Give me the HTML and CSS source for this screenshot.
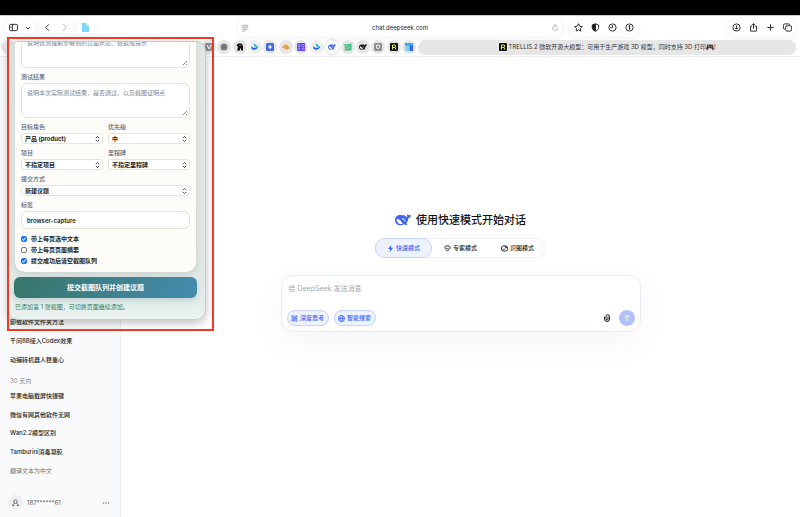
FILE: index.html
```
<!DOCTYPE html>
<html lang="zh-CN">

<head>
    <meta charset="UTF-8">
    <meta name="viewport" content="width=device-width, initial-scale=1.0">
    <title>DeepSeek</title>
    <link rel="stylesheet" href="styles.css">
</head>

<body>
    <div class="screen-edge"></div>

    <header class="browser">
        <div class="toolbar">
            <div class="toolbar-side">
                <div class="pill pill-sidebar">
                    <button aria-label="边栏"><svg viewBox="0 0 20 20"><rect x="1" y="3" width="18" height="14" rx="3"/><path d="M8 3v14M3.500 7h2M3.500 10h2"/></svg></button>
                    <button aria-label="标签页组" class="small"><svg viewBox="0 0 20 20"><path d="M3 7l7 6 7-6" stroke-width="3"/></svg></button>
                </div>
                <div class="pill">
                    <button aria-label="后退"><svg viewBox="0 0 20 20"><path d="M13 3l-7 7 7 7" stroke-width="2"/></svg></button>
                    <button aria-label="前进" class="muted"><svg viewBox="0 0 20 20"><path d="M7 3l7 7-7 7" stroke-width="2"/></svg></button>
                </div>
                <div class="pill">
                    <button aria-label="扩展"><svg viewBox="0 0 20 20"><path d="M2 0h10l6 6v14H2z" fill="#7fd6fb" stroke="none"/><path d="M12 0l6 6h-6z" fill="#c9f0ff" stroke="none"/></svg></button>
                </div>
            </div>

            <div class="address">
                <button aria-label="阅读器" class="muted"><svg viewBox="0 0 20 20"><path d="M3 3h14v7H3zM3 14h12M3 18h8M6 6.500h8"/></svg></button>
                <span>chat.deepseek.com</span>
                <button aria-label="重新载入" class="muted"><svg viewBox="0 0 20 20"><path d="M16 10a6 6 0 1 1-3-5M10 1l4 4-4 4"/></svg></button>
            </div>

            <div class="toolbar-side">
                <div class="pill">
                    <button aria-label="收藏"><svg viewBox="0 0 20 20"><path d="M10 1.500l2.600 5.500 6 .8-4.400 4.200 1.100 6L10 15.100 4.700 18l1.100-6L1.400 7.800l6-.8z"/></svg></button>
                    <button aria-label="隐私报告"><svg viewBox="0 0 20 20"><path d="M10 2l7 2.500V10c0 4-3 6.500-7 8-4-1.500-7-4-7-8V4.500z"/><path d="M10 2v16c-4-1.500-7-4-7-8V4.500z" fill="#222"/></svg></button>
                    <button aria-label="历史记录"><svg viewBox="0 0 20 20"><circle cx="10" cy="10" r="8"/><path d="M10 5v5.500H5"/></svg></button>
                    <button aria-label="密码"><svg viewBox="0 0 20 20"><circle cx="10" cy="10" r="8"/><circle cx="10" cy="7" r="1.500"/><path d="M10 8.500V15M10 12h2"/></svg></button>
                </div>
                <div class="pill pill-right">
                    <button aria-label="下载"><svg viewBox="0 0 20 20"><circle cx="10" cy="10" r="8"/><path d="M10 5.500v8M6.500 10.500l3.500 3.500 3.500-3.500"/></svg></button>
                    <button aria-label="共享"><svg viewBox="0 0 20 20"><path d="M7 7H3.500v11h13V7H13M10 13V1.500M6.500 5L10 1.500 13.500 5"/></svg></button>
                    <button aria-label="新标签页"><svg viewBox="0 0 20 20"><path d="M10 3v14M3 10h14"/></svg></button>
                    <button aria-label="标签页概览"><svg viewBox="0 0 20 20"><rect x="6" y="6" width="13" height="12" rx="3"/><path d="M4 14c-2 0-3-1-3-3V5c0-2 1-3 3-3h8c2 0 3 1 3 3"/></svg></button>
                </div>
            </div>
        </div>

        <nav class="tabbar" aria-label="标签页">
            <span class="tab"></span>
            <div class="tab-strip">
                <span class="tab"><svg viewBox="0 0 16 16"><rect width="16" height="16" rx="3" fill="#8b8d96"/><path d="M4 4l4 8 4-8" fill="none" stroke="#fff" stroke-width="2"/></svg></span>
                <span class="tab"><svg viewBox="0 0 16 16"><circle cx="8" cy="8" r="7" fill="#808080"/><circle cx="8" cy="8" r="3" fill="#6a6a6a"/></svg></span>
                <span class="tab"><svg viewBox="0 0 16 16"><path d="M1 4l4-3h6l3 5v9h-4v-4H8v4H2l2-7z" fill="#111"/><circle cx="8" cy="5" r="1" fill="#fff"/></svg></span>
                <span class="tab tab-light"><svg viewBox="0 0 16 16"><use href="#swoosh"/></svg></span>
                <span class="tab"><svg viewBox="0 0 16 16"><rect width="16" height="16" rx="3" fill="#4069e8"/><path d="M8 3l4 5-4 5-4-5z" fill="#dfe9ff"/></svg></span>
                <span class="tab"><svg viewBox="0 0 16 16"><path d="M2 6l6-4 6 4-3 2 4 2-6 4-6-4 3-2z" fill="#f0a23c"/><path d="M0 8h7M9 10h7" stroke="#c98b54" stroke-width="2"/></svg></span>
                <span class="tab"><svg viewBox="0 0 16 16"><rect width="16" height="16" rx="2" fill="#5b3df0"/><path d="M2 3h4v4H2zM10 3h4v4h-4zM2 10h4v3H2zM10 10h4v3h-4z" fill="none" stroke="#cfc4ff" stroke-width="1"/></svg></span>
                <span class="tab tab-light"><svg viewBox="0 0 16 16"><use href="#swoosh"/></svg></span>
                <span class="tab tab-open"><svg viewBox="0 0 24 18" class="whale"><use href="#whale"/></svg></span>
                <span class="tab"><svg viewBox="0 0 16 16"><path d="M0 3l15-2v14H1l1-5z" fill="#45bd87"/><path d="M2 7l7-2M4 12l8-4" stroke="#e8fff4" stroke-width="1"/></svg></span>
                <span class="tab"><svg viewBox="0 0 24 18" class="whale whale-dark"><use href="#whale"/></svg></span>
                <span class="tab"><svg viewBox="0 0 16 16"><rect width="16" height="16" rx="3" fill="#8b8d96"/><rect x="5" y="4" width="6" height="7" rx="2" fill="none" stroke="#fff" stroke-width="2"/></svg></span>
                <span class="tab"><svg viewBox="0 0 16 16"><use href="#runner"/></svg></span>
                <span class="tab"><svg viewBox="0 0 16 16"><rect width="16" height="16" rx="1" fill="#3b64f2"/><path d="M0 0h16v5H0z" fill="#35a5f5"/><path d="M0 5h9v11H0z" fill="#7cdcf3"/></svg></span>
            </div>
            <a class="tab-current" href="#"><svg viewBox="0 0 16 16"><use href="#runner"/></svg><span class="tab-title">TRELLIS.2 微软开源大模型：可用于生产游戏 3D 模型，同时支持 3D 打印</span><svg viewBox="0 0 20 16"><path d="M3 2h14l3 12-3 2-4-5H7l-4 5-3-2z" fill="#444"/><path d="M5 6h4M7 4v4" stroke="#ddd"/><circle cx="14" cy="6" r="1.500" fill="#c66"/></svg><span>!</span></a>
        </nav>
    </header>

    <div class="app">
        <aside class="sidebar">
            <nav class="history">
                <a href="#">卸载软件文件夹方法</a>
                <a href="#">千问8B接入Codex效果</a>
                <a href="#">动捕转机器人稳重心</a>
            </nav>
            <h2>30 天内</h2>
            <nav class="history history-month">
                <a href="#">苹果电脑截屏快捷键</a>
                <a href="#">微信有网其他软件无网</a>
                <a href="#">Wan2.2模型区别</a>
                <a href="#">Tamburini消毒凝胶</a>
                <a href="#" class="faded">翻译文本为中文</a>
            </nav>
            <div class="account">
                <span class="avatar"><svg viewBox="0 0 16 16"><circle cx="8" cy="6" r="4"/><path d="M1 15c1-3 3-4 5-5M15 15c-1-3-3-4-5-5M1 15h4M11 15h4"/></svg></span>
                <span>187******61</span>
                <button aria-label="更多"><svg viewBox="0 0 16 16"><circle cx="3" cy="8" r="1"/><circle cx="8" cy="8" r="1"/><circle cx="13" cy="8" r="1"/></svg></button>
            </div>
        </aside>

        <main class="chat">
            <h1><svg viewBox="0 0 24 18" class="whale"><use href="#whale"/></svg>使用快速模式开始对话</h1>

            <div class="modes">
                <button class="active"><svg viewBox="0 0 16 16"><path d="M10 0L2 9h5l-1 7 8-10H9z" fill="#4166f5" stroke="none"/></svg>快速模式</button>
                <button><svg viewBox="0 0 16 16"><path d="M4 2h8l3 4-7 8-7-8zM5 6l3 3 3-3"/></svg>专家模式</button>
                <button><svg viewBox="0 0 16 16"><rect x="1" y="2" width="14" height="12" rx="5"/><path d="M3 12c3-5 5-1 7-3M10 2v4h4"/></svg>识图模式</button>
            </div>

            <form class="composer">
                <textarea aria-label="消息" rows="1" placeholder="给 DeepSeek 发送消息"></textarea>
                <div class="composer-actions">
                    <button type="button" class="chip"><svg viewBox="0 0 16 16"><path d="M2 2c4-2 12 6 12 12-4 2-12-6-12-12zM14 2c2 4-6 12-12 12C0 10 8 2 14 2z"/><circle cx="8" cy="8" r="1"/></svg>深度思考</button>
                    <button type="button" class="chip"><svg viewBox="0 0 16 16"><circle cx="8" cy="8" r="7"/><ellipse cx="8" cy="8" rx="3" ry="7"/><path d="M1 8h14"/></svg>智能搜索</button>
                    <button type="button" class="attach" aria-label="附件"><svg viewBox="0 0 16 16"><path d="M3 5v5a5 5 0 0 0 10 0V5a3.500 3.500 0 0 0-7 0v5a2 2 0 0 0 4 0V5"/></svg></button>
                    <button type="submit" class="send" aria-label="发送"><svg viewBox="0 0 16 16"><path d="M8 14V2M3 7l5-5 5 5"/></svg></button>
                </div>
            </form>
        </main>
    </div>

    <section class="popup">
        <form class="capture">
            <div class="card">
                <div class="field">
                    <textarea aria-label="期望结果" placeholder="说明该流程期望看到的页面状态、数据或提示"></textarea>
                </div>
                <div class="field">
                    <label for="result">测试结果</label>
                    <textarea id="result" placeholder="说明本次实际测试结果，是否通过，以及截图证明点"></textarea>
                </div>
                <div class="field-row">
                    <div class="field">
                        <label for="role">目标角色</label>
                        <select id="role"><option>产品 (product)</option></select>
                    </div>
                    <div class="field">
                        <label for="priority">优先级</label>
                        <select id="priority"><option>中</option></select>
                    </div>
                </div>
                <div class="field-row">
                    <div class="field">
                        <label for="project">项目</label>
                        <select id="project"><option>不指定项目</option></select>
                    </div>
                    <div class="field">
                        <label for="milestone">里程碑</label>
                        <select id="milestone"><option>不指定里程碑</option></select>
                    </div>
                </div>
                <div class="field">
                    <label for="method">提交方式</label>
                    <select id="method"><option>新建议题</option></select>
                </div>
                <div class="field">
                    <label for="tags">标签</label>
                    <input type="text" id="tags" value="browser-capture">
                </div>
                <div class="checks">
                    <label><input type="checkbox" checked>带上每页选中文本</label>
                    <label><input type="checkbox">带上每页页面摘要</label>
                    <label><input type="checkbox" checked>提交成功后清空截图队列</label>
                </div>
            </div>
            <button type="submit" class="submit">提交截图队列并创建议题</button>
            <p class="status">已添加第 1 张截图，可切换页面继续添加。</p>
        </form>
    </section>
    <div class="highlight"></div>

    <!-- shared symbols -->
    <svg class="symbols" aria-hidden="true">
        <symbol id="whale" viewBox="0 0 24 18">
            <path d="M0 9C0 4 4 1 9 1.500c1.500.1 2.500.5 3.500 1.200L12 1c2 .2 3.500 1.500 4.500 3 .8.600 1.500.400 2 0-.6-1-.8-2.300-.3-3.500 1 1.500 3.300 1.800 5.800 1-.2 2.500-1.500 4.500-4 5 0 3-1.200 5.300-3 7.200l2 2c-1.500 1-3.500.8-5.200-.2C8 18.500 0 17 0 9z"/>
            <path d="M2.500 7.500c3.500 0 5.500 1.500 7 4 .8 1.400 1.500 2.300 2.500 3-5 2-9.500-1.500-9.500-7z" fill="#fff"/>
            <path d="M10.500 7c2.500 0 4 1.500 4.500 4" fill="none" stroke="#fff" stroke-width="1.500"/>
        </symbol>
        <symbol id="swoosh" viewBox="0 0 16 16">
            <path d="M5 1c5 1 6 5 9 6-2 1-5 1-7 0z" fill="#17b3d0"/>
            <path d="M0 6c3 4 8 5 15 1-2 6-10 9-14 4z" fill="#1d5fe0"/>
        </symbol>
        <symbol id="runner" viewBox="0 0 16 16">
            <rect width="16" height="16" rx="2" fill="#111"/>
            <path d="M5 13V4h5l2 2-2 3H6m4 0l2 4" fill="none" stroke="#d9f542" stroke-width="2"/>
        </symbol>
    </svg>
</body>

</html>
```
FILE: styles.css
```
* {
    box-sizing: border-box;
}

body {
    margin: 0;
    min-height: 100vh;
    display: flex;
    flex-direction: column;
    position: relative;
    background: #fff;
    color: #1c1e22;
    font-family: Inter, "Noto Sans CJK SC", sans-serif;
    font-size: 6px;
    line-height: 10px;
}

button,
input,
select,
textarea {
    font: inherit;
    color: inherit;
    margin: 0;
}

button {
    padding: 0;
    border: none;
    background: none;
    display: flex;
    align-items: center;
    justify-content: center;
    cursor: pointer;
}

a {
    color: inherit;
    text-decoration: none;
}

svg {
    display: block;
    fill: none;
    stroke: currentColor;
    flex: none;
}

.symbols {
    position: absolute;
    width: 0;
    height: 0;
}

.whale {
    width: 9px;
    height: 7px;
    fill: #4166f5;
    stroke: none;
}

.whale-dark {
    fill: #111;
}

.screen-edge {
    height: 15px;
    background: #000;
}

/* Browser chrome */
.browser {
    border-top: 1px solid #ccc;
    border-bottom: 1px solid #eee;
}

.toolbar {
    display: grid;
    grid-template-columns: 1fr 40.5% 1fr;
    align-items: center;
    height: 23px;
}

.toolbar-side {
    display: flex;
    gap: 4px;
    padding: 0 4px;
}

.toolbar-side:last-child {
    padding-left: 8px;
}

.pill,
.address {
    display: flex;
    align-items: center;
    height: 18px;
    border-radius: 9px;
    background: #fff;
    box-shadow: 0 1px 6px rgba(0, 0, 0, 0.07);
}

.pill button {
    width: 17px;
    height: 18px;
}

.pill svg {
    width: 9px;
    height: 9px;
    stroke-width: 2;
}

.pill-sidebar {
    padding: 0 2px 0 1px;
}

.pill-sidebar .small {
    width: 11px;
}

.pill .small svg {
    width: 6px;
    height: 6px;
}

.pill-right {
    margin-left: auto;
}

.toolbar .muted {
    color: #aaa;
}

.address {
    justify-content: space-between;
    padding: 0 3px;
}

.address svg {
    width: 8px;
    height: 8px;
    stroke-width: 2;
}

.tabbar {
    display: flex;
    align-items: center;
    gap: 2px;
    height: 17px;
    padding: 0 4px 1px 1px;
}

.tab-strip {
    display: flex;
    justify-content: space-between;
    width: 27%;
    margin-left: auto;
}

.tab {
    display: flex;
    align-items: center;
    justify-content: center;
    width: 14px;
    height: 14px;
    border-radius: 50%;
    background: #e6e6e6;
}

.tab svg {
    width: 8px;
    height: 8px;
    stroke: none;
}

.tab-light {
    background: #efefef;
}

.tab-open {
    background: #fff;
    box-shadow: 0 0 2px rgba(0, 0, 0, 0.3);
}

.tab-current {
    display: flex;
    align-items: center;
    justify-content: center;
    width: 47.5%;
    height: 15px;
    border-radius: 8px;
    background: #e6e6e6;
    color: #333;
}

.tab-current svg {
    width: 8px;
    height: 8px;
    stroke: none;
}

.tab-title {
    margin-left: 2px;
}

/* Chat page */
.app {
    flex: 1;
    display: flex;
}

.sidebar {
    display: flex;
    flex-direction: column;
    justify-content: flex-end;
    width: 121px;
    border-right: 1px solid #f0f1f3;
    background: #f9fafb;
}

.history {
    display: grid;
    grid-auto-rows: 1fr;
    align-items: center;
    min-height: 56px;
    padding: 0 10px;
    font-weight: 500;
}

.history-month {
    min-height: 93px;
}

.history .faded {
    color: #777;
    font-weight: 400;
}

.sidebar h2 {
    margin: 0;
    padding: 7px 10px 1px;
    color: #888;
    font-size: 6px;
    font-weight: 400;
}

.account {
    display: flex;
    align-items: center;
    gap: 4px;
    padding: 15px 10px 7px 8px;
    color: #555;
}

.account button {
    margin-left: auto;
}

.account button svg {
    width: 8px;
    height: 8px;
}

.avatar {
    display: flex;
    align-items: center;
    justify-content: center;
    width: 15px;
    height: 15px;
    border-radius: 50%;
    background: #eceef0;
}

.avatar svg {
    width: 7px;
    height: 7px;
    stroke-width: 2;
}

.chat {
    flex: 1;
    display: flex;
    flex-direction: column;
    align-items: center;
    padding: 155px 20px 0;
}

.chat h1 {
    display: flex;
    align-items: center;
    gap: 5px;
    margin: 0;
    color: #111;
    font-size: 11px;
    font-weight: 500;
    line-height: 16px;
}

.chat h1 svg {
    width: 16px;
    height: 12px;
}

.modes {
    display: flex;
    margin-top: 10px;
    border-radius: 10px;
    box-shadow: inset 0 0 0 1px #f0f0f3;
}

.modes button {
    gap: 2px;
    width: 57px;
    height: 20px;
    border-radius: 10px;
    font-weight: 500;
}

.modes svg,
.chip svg {
    width: 7px;
    height: 7px;
    stroke-width: 2;
}

.modes .active {
    border: 1px solid #c6d2fb;
    background: #edf2ff;
    color: #4166f5;
}

.composer {
    display: flex;
    flex-direction: column;
    justify-content: space-between;
    width: 100%;
    max-width: 360px;
    min-height: 57px;
    margin-top: 17px;
    padding: 8px 5px 5px;
    border: 1px solid #ececf0;
    border-radius: 12px;
    background: #fff;
    box-shadow: 0 10px 30px rgba(80, 100, 160, 0.06);
}

.composer textarea {
    height: 12px;
    padding: 0 2px;
    border: none;
    outline: none;
    resize: none;
    overflow: hidden;
    background: none;
    font-size: 7px;
    line-height: 10px;
}

.composer textarea::placeholder {
    color: #a5a8ae;
}

.composer-actions {
    display: flex;
    align-items: center;
}

.chip {
    gap: 2px;
    width: 42px;
    height: 16px;
    margin-right: 5px;
    border: 1px solid #c6d2fb;
    border-radius: 8px;
    background: #edf2ff;
    color: #4166f5;
    font-weight: 500;
}

.attach {
    margin-left: auto;
    margin-right: 8px;
}

.attach svg,
.send svg {
    width: 8px;
    height: 8px;
    stroke-width: 2;
}

.send {
    width: 16px;
    height: 16px;
    border-radius: 50%;
    background: #b2c0fc;
    color: #fff;
}

/* Capture popup, scrolled to its end */
.popup {
    position: absolute;
    top: 41px;
    left: 8px;
    display: flex;
    align-items: flex-end;
    width: 198px;
    height: 279px;
    overflow: hidden;
    border: 1px solid #c5cbc8;
    border-left: none;
    border-radius: 10px;
    background: linear-gradient(#e1e7e4, #dfe6e3 80%, #e9f2ee);
    box-shadow: 0 3px 10px rgba(0, 0, 0, 0.25);
}

.capture {
    width: 100%;
    padding: 0 8px 7px 6px;
}

.card {
    display: flex;
    flex-direction: column;
    gap: 4px;
    margin: 0 1px;
    padding: 6px;
    border-radius: 10px;
    background: #fdfcf8;
    box-shadow: 0 2px 6px rgba(60, 90, 80, 0.15);
}

.field {
    display: flex;
    flex-direction: column;
    gap: 1px;
    flex: 1;
    min-width: 0;
}

.field-row {
    display: flex;
    gap: 5px;
}

.field label {
    color: #5d6678;
    font-weight: 500;
}

.field textarea,
.field input,
.field select {
    width: 100%;
    border: 1px solid #e8e4d8;
    background-color: #fff;
    outline: none;
}

.field textarea {
    height: 35px;
    padding: 4px 5px;
    border-radius: 6px;
}

.field textarea::placeholder {
    color: #858585;
}

.field textarea::-webkit-resizer {
    background: url("data:image/svg+xml,%3Csvg xmlns='http://www.w3.org/2000/svg' viewBox='0 0 15 15' stroke='%23888'%3E%3Cpath d='M9 13l4-4M12 13l1-1'/%3E%3C/svg%3E") right bottom / 15px 15px no-repeat;
}

.field input {
    height: 18px;
    padding: 0 5px;
    border-radius: 6px;
    font-weight: 600;
}

.field select {
    appearance: none;
    height: 11px;
    padding: 0 3px;
    border-radius: 3px;
    background-image: url("data:image/svg+xml,%3Csvg xmlns='http://www.w3.org/2000/svg' viewBox='0 0 10 14' fill='none' stroke='%23333' stroke-width='2'%3E%3Cpath d='M1 5l4-4 4 4M1 9l4 4 4-4'/%3E%3C/svg%3E");
    background-repeat: no-repeat;
    background-position: right 2px center;
    background-size: 5px 6px;
    font-weight: 700;
    line-height: 9px;
}

.checks label {
    display: flex;
    align-items: center;
    gap: 4px;
    height: 11px;
    font-weight: 600;
}

.checks input {
    appearance: none;
    width: 6px;
    height: 6px;
    border: 1px solid #777;
    border-radius: 2px;
    background: #fff;
}

.checks input:checked {
    border: none;
    background: #1f75f5 url("data:image/svg+xml,%3Csvg xmlns='http://www.w3.org/2000/svg' viewBox='0 0 12 12' fill='none' stroke='white' stroke-width='2'%3E%3Cpath d='M3 6l2 3 4-6'/%3E%3C/svg%3E");
}

.submit {
    width: 100%;
    height: 21px;
    margin-top: 5px;
    border-radius: 6px;
    background: linear-gradient(100deg, #38766a, #438bad);
    box-shadow: 0 3px 6px rgba(50, 110, 120, 0.2);
    color: #fff;
    font-size: 7px;
    font-weight: 700;
}

.status {
    margin: 4px 1px 0;
    color: #37784c;
}

.highlight {
    position: absolute;
    top: 37px;
    left: 7px;
    width: 207px;
    height: 294px;
    border: 2px solid #f03a24;
    pointer-events: none;
}
```
